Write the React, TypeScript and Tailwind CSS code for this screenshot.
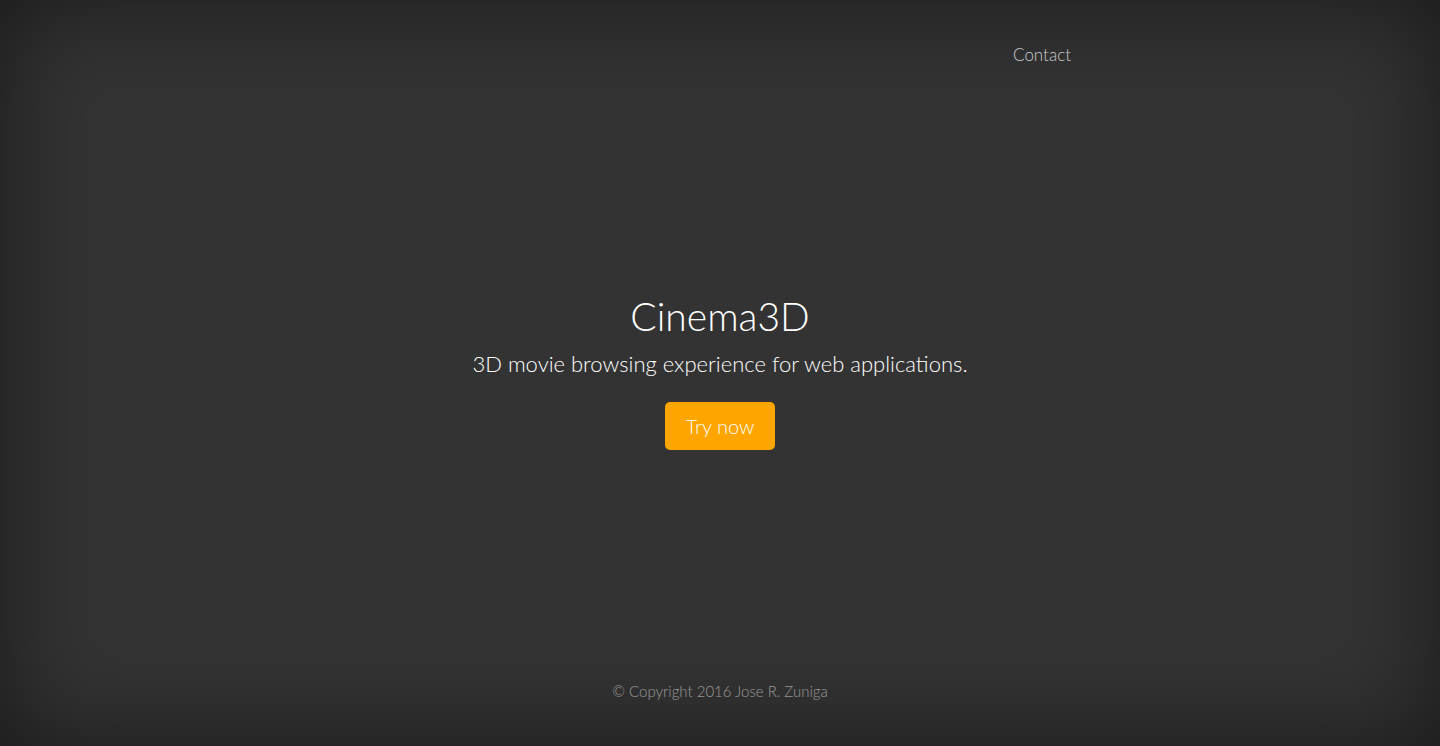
import React from 'react';

const App = () => {
  return (
    <div
      className="h-[746px] w-full bg-[#333333] text-white shadow-[inset_0_0_100px_rgba(0,0,0,0.5)] flex flex-col"
      style={{ fontFamily: 'Lato, "Open Sans", sans-serif' }}
    >
      {/* Masthead */}
      <header className="w-[702px] mx-auto pt-[43px] flex justify-end">
        <nav className="flex gap-5">
          <a href="#" className="text-[17px] leading-6 font-light text-white/75">
            Contact
          </a>
        </nav>
      </header>

      {/* Cover */}
      <main className="flex-1 flex flex-col items-center justify-center text-center pb-[6px]">
        <h1 className="text-[39px] leading-[48px] font-light text-white mb-[8px]">Cinema3D</h1>
        <p className="text-[22px] leading-[32px] font-light text-white">
          3D movie browsing experience for web applications.
        </p>
        <button className="mt-[22px] w-[110px] h-[48px] rounded-[5px] bg-[#ffa500] text-white text-[20px] font-light">
          Try now
        </button>
      </main>

      {/* Footer */}
      <footer className="pb-[45px] text-center">
        <p className="text-[15px] leading-5 font-light text-white/50">© Copyright 2016 Jose R. Zuniga</p>
      </footer>
    </div>
  );
};

export default App;
